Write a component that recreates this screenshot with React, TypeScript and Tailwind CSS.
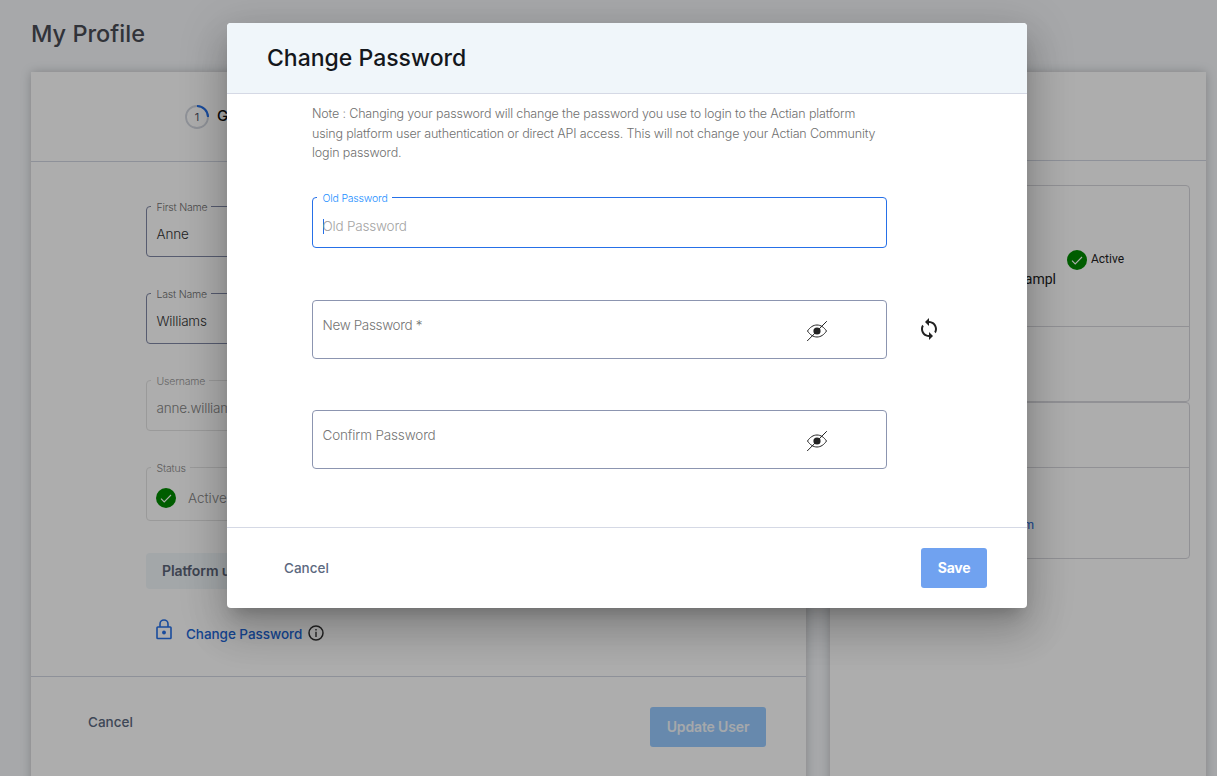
import React from "react";
import { MdSync } from "react-icons/md";

function CheckBadge() {
  return (
    <svg width="20" height="20" viewBox="0 0 20 20" className="shrink-0">
      <circle cx="10" cy="10" r="10" fill="#008a00" />
      <path d="M5 10.700l3.200 3.300L15 7" fill="none" stroke="#fff" strokeWidth="1.100" />
    </svg>
  );
}

function EyeOff() {
  return (
    <svg width="22" height="22" viewBox="0 0 22 22" className="mt-1 shrink-0" fill="none" stroke="#222" strokeWidth="1">
      <path d="M1.500 11C4 7.200 7.300 5 11 5s7 2.200 9.500 6C18 14.800 14.700 17 11 17s-7-2.200-9.500-6z" />
      <circle cx="11" cy="11" r="3.600" fill="#222" stroke="none" />
      <path d="M1.200 21L20.800 1.200" />
    </svg>
  );
}

function Field({ label, tone, children }: { label: string; tone: string; children: React.ReactNode }) {
  return (
    <div className={"relative flex items-center rounded border pl-[9.500px] " + tone}>
      <span className="absolute -top-[7px] left-[4px] bg-white pr-[4px] pl-[5.500px] text-[10.500px] leading-4 font-light tracking-[-0.2px] whitespace-nowrap">
        {label}
      </span>
      {children}
    </div>
  );
}

function ProfileCard() {
  return (
    <section className="h-[720px] w-[775px] shrink-0 bg-white shadow-[0_0_10px_rgba(0,0,0,0.22)]">
      <div className="flex h-[90px] items-center gap-2 border-b border-[#d2d6e2] pl-[154px]">
        <svg width="24" height="24" viewBox="0 0 24 24">
          <circle cx="12" cy="12" r="11" fill="none" stroke="#d3d7e0" strokeWidth="1.8" />
          <path d="M12 1a11 11 0 0 1 11 11" fill="none" stroke="#2670e8" strokeWidth="2" />
          <text x="12" y="16" textAnchor="middle" fontSize="11" fill="#4f5666">1</text>
        </svg>
        <span className="text-[15px] font-medium text-[#111]">General</span>
      </div>
      <div className="flex h-[515px] flex-col border-b border-[#d2d6e2] pt-[44px] pl-[115px]">
        <div className="flex w-[400px] flex-col gap-9 text-[13.500px] tracking-[-0.2px]">
          <Field label="First Name" tone="h-[51px] border-[#8088a5] text-[#6f6f6f]">
            <span className="pt-[5px] font-[350] text-[#333]">Anne</span>
          </Field>
          <Field label="Last Name" tone="h-[51px] border-[#8088a5] text-[#6f6f6f]">
            <span className="pt-[5px] font-[350] text-[#333]">Williams</span>
          </Field>
          <Field label="Username" tone="h-[51px] border-[#e4e4e4] text-[#999]">
            <span className="pt-[5px] font-light text-[#858585]">anne.williams</span>
          </Field>
          <Field label="Status" tone="h-[54px] border-[#e4e4e4] text-[#888]">
            <span className="-ml-[0.500px] flex items-center gap-3 pt-[7px] font-light text-[#858585]">
              <CheckBadge />
              <span className="pt-px tracking-normal">Active</span>
            </span>
          </Field>
        </div>
        <div className="mt-8 flex h-9 w-[130px] items-center rounded bg-[#f0f6fa] pb-px pl-4 text-[14px] font-semibold tracking-[-0.1px] whitespace-nowrap text-[#5c6578]">
          Platform user
        </div>
        <div className="mt-[29px] flex h-7 pl-[10px]">
          <svg width="16" height="21" viewBox="0 0 16 21" fill="none" stroke="#2670e8" strokeWidth="1.600" className="mt-[1px]">
            <rect x="1" y="8" width="14" height="11.500" rx="0.800" />
            <path d="M4 8V5a4 4 0 0 1 8 0v3" />
            <circle cx="8" cy="13.500" r="1.900" fill="#2670e8" stroke="none" />
          </svg>
          <span className="ml-[14px] w-[117px] pt-[6px] text-[13.500px] leading-5 font-medium tracking-[-0.05px] whitespace-nowrap text-[#2166d6]">
            Change Password
          </span>
          <svg width="16" height="16" viewBox="0 0 16 16" fill="none" stroke="#333" className="mt-[7px] ml-[5px]">
            <circle cx="8" cy="8" r="7" strokeWidth="1.500" />
            <path d="M8 6.700V12M8 4v1.500" strokeWidth="1.400" />
          </svg>
        </div>
      </div>
      <div className="flex h-[100px] items-center justify-between pr-10 pl-[57px]">
        <span className="pb-[9px] text-[13.500px] font-medium text-[#5c6980]">Cancel</span>
        <span className="flex h-10 w-[116px] items-center justify-center rounded-[3px] bg-[#98caff] pb-px text-[14px] font-semibold tracking-[-0.15px] text-[#f4f8fd]">
          Update User
        </span>
      </div>
    </section>
  );
}

function SummaryCard() {
  return (
    <section className="h-[720px] w-[376px] shrink-0 bg-white shadow-[0_0_10px_rgba(0,0,0,0.22)]">
      <div className="h-[89px] border-b border-[#d2d6e2]" />
      <div className="flex flex-col px-4 pt-6">
        <div className="h-[217px] rounded border border-[#d6d6dc]">
          <div className="h-[141px] border-b border-[#d6d6dc] pt-[64px]">
            <div className="flex h-5 items-center gap-1 pl-[220px] font-['Roboto',sans-serif] text-[12px] text-[#222]">
              <CheckBadge />
              <span className="pb-0.5">Active</span>
            </div>
            <div className="-mt-px flex w-[209px] justify-end font-['Roboto',sans-serif] text-[14px] leading-5 text-[#222]">
              anne.williams@exampl
            </div>
          </div>
        </div>
        <div className="h-[157px] rounded border border-[#d6d6dc]">
          <div className="h-[65px] border-b border-[#d6d6dc]" />
          <div className="flex w-[187px] justify-end pt-[47px] font-['Roboto',sans-serif] text-[12px] leading-5 text-[#2166d6]">
            anne.williams@example.com
          </div>
        </div>
      </div>
    </section>
  );
}

function PasswordDialog() {
  return (
    <div className="flex h-[585px] w-[800px] flex-col rounded bg-white shadow-[0_11px_15px_-7px_rgba(0,0,0,0.2),0_24px_38px_3px_rgba(0,0,0,0.14),0_9px_46px_8px_rgba(0,0,0,0.12)]">
      <h2 className="flex h-[71px] items-center rounded-t border-b border-[#d5d9e5] bg-[#f0f6fa] pl-10 text-[23px] font-medium text-[#14171c]">
        Change Password
      </h2>
      <div className="flex h-[433px] flex-col pt-[10px] pl-[85px]">
        <p className="text-[12.500px] leading-[19.500px] font-[350] tracking-[-0.16px] whitespace-nowrap text-[#707070]">
          Note : Changing your password will change the password you use to login to the Actian platform
          <br />
          using platform user authentication or direct API access. This will not change your Actian Community
          <br />
          login password.
        </p>
        <div className="mt-[34px] w-[575px]">
          <Field label="Old Password" tone="h-[51px] border-[#2670e8] text-[#2690ff]">
            <span className="mt-2 h-[15px] w-px bg-[#2670e8]" />
            <span className="-ml-px pt-[9px] text-[13.500px] font-light tracking-[-0.2px] text-[#a4a4a4]">Old Password</span>
          </Field>
        </div>
        <div className="mt-[52px] flex items-center gap-[30px]">
          <div className="flex h-[59px] w-[575px] items-center justify-between rounded border border-[#8c95b0] pr-[58px] pl-[9.500px] text-[13.500px] font-light text-[#757575]">
            <span className="pb-2 tracking-[-0.35px]">New Password *</span>
            <EyeOff />
          </div>
          <MdSync size={24} color="#222" />
        </div>
        <div className="mt-[51px] flex h-[59px] w-[575px] items-center justify-between rounded border border-[#8c95b0] pr-[58px] pl-[9.500px] text-[13.500px] font-light text-[#757575]">
          <span className="pb-2 tracking-[-0.15px]">Confirm Password</span>
          <EyeOff />
        </div>
      </div>
      <div className="flex h-[81px] items-center justify-between border-t border-[#d5d9e5] pr-10 pl-[57px]">
        <span className="text-[13.500px] font-medium text-[#5c6980]">Cancel</span>
        <span className="flex h-10 w-[66px] items-center justify-center rounded-[3px] bg-[#70a2f0] pb-0.5 text-[14px] font-bold tracking-[-0.3px] text-white">
          Save
        </span>
      </div>
    </div>
  );
}

export default function App() {
  return (
    <div className="relative h-[776px] w-[1217px] overflow-hidden bg-[#f6f8fb] font-['Inter',sans-serif]">
      <div className="flex h-full flex-col pl-[31px]">
        <h1 className="flex h-[72px] shrink-0 items-center pb-1 text-[23.500px] font-medium text-[#494c55]">My Profile</h1>
        <div className="flex gap-6">
          <ProfileCard />
          <SummaryCard />
        </div>
      </div>
      <div className="absolute inset-0 bg-black/32 pt-[23px] pl-[227px]">
        <PasswordDialog />
      </div>
    </div>
  );
}
